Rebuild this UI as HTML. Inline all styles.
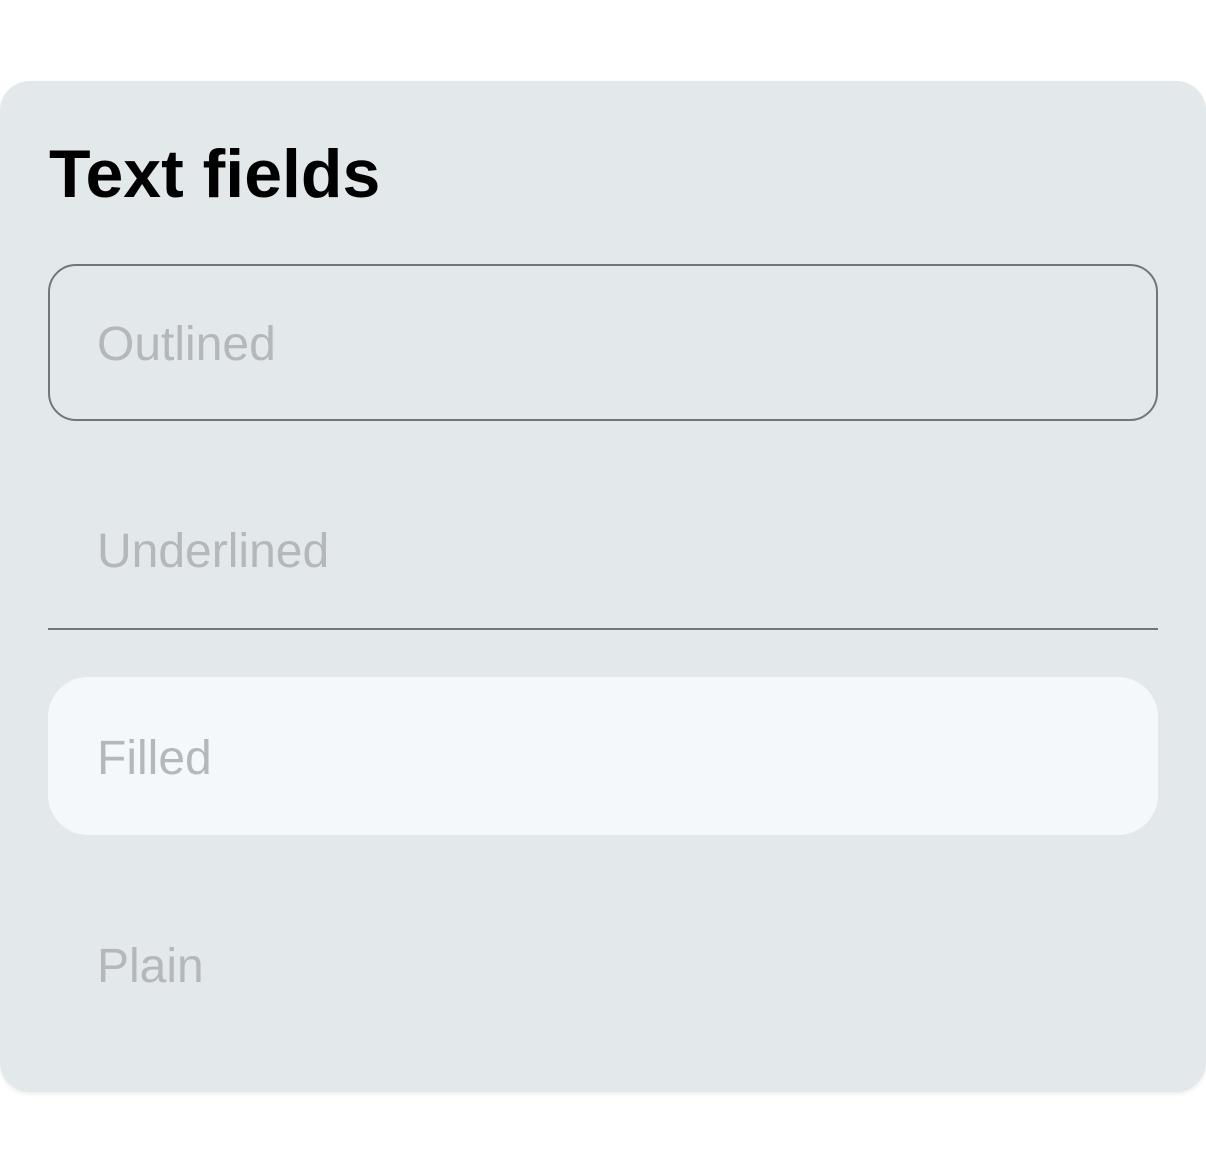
<!DOCTYPE html>
<html><head><style>
html,body{margin:0;padding:0;background:#fff;width:1206px;height:1172px;overflow:hidden;font-family:"Liberation Sans",sans-serif}
.card{position:absolute;left:0;top:81px;width:1206px;height:1011px;background:#e3e8eb;border-radius:30px;box-shadow:0 2px 4px rgba(0,0,0,0.08)}
h1{position:absolute;left:49px;top:134px;margin:0;font-size:68px;font-weight:bold;color:#000;line-height:80px;letter-spacing:0}
.f{position:absolute;left:48px;width:1110px;box-sizing:border-box}
.t{position:absolute;left:97px;font-size:48px;color:#b4b8bb;line-height:60px}
</style></head><body>
<div class="card"></div>
<h1>Text fields</h1>
<div class="f" style="top:264px;height:157px;border:2px solid #6f7779;border-radius:28px"></div>
<div class="t" style="top:315px">Outlined</div>
<div class="t" style="top:522px">Underlined</div>
<div class="f" style="top:628px;height:2px;background:#6f7779"></div>
<div class="f" style="top:677px;height:158px;background:#f4f8fb;border-radius:40px"></div>
<div class="t" style="top:729px">Filled</div>
<div class="t" style="top:937px">Plain</div>
</body></html>
